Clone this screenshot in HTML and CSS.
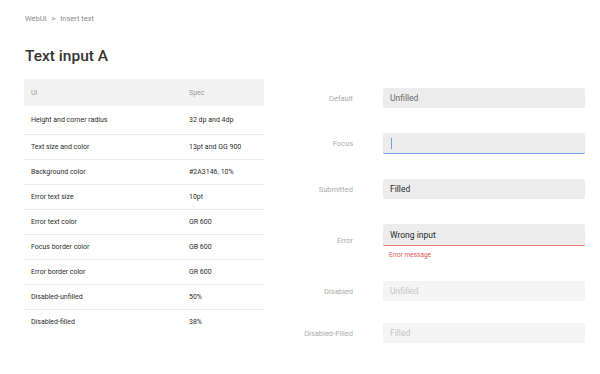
FILE: index.html
```html
<!DOCTYPE html>
<html lang="en">
<head>
  <meta charset="UTF-8" />
  <title>Text input A</title>
  <link rel="stylesheet" href="styles.css">
</head>
<body>
  <div class="page">
    <div class="breadcrumb">WebUI <span class="sep">&gt;</span> Insert text</div>
    <h1>Text input A</h1>

    <div class="content">
      <table class="spec-table">
        <thead>
          <tr><th>UI</th><th>Spec</th></tr>
        </thead>
        <tbody>
          <tr class="first"><td>Height and corner radius</td><td>32 dp and 4dp</td></tr>
          <tr><td>Text size and color</td><td>13pt and GG 900</td></tr>
          <tr><td>Background color</td><td>#2A3146, 10%</td></tr>
          <tr><td>Error text size</td><td>10pt</td></tr>
          <tr><td>Error text color</td><td>GR 600</td></tr>
          <tr><td>Focus border color</td><td>GB 600</td></tr>
          <tr><td>Error border color</td><td>GR 600</td></tr>
          <tr><td>Disabled-unfilled</td><td>50%</td></tr>
          <tr class="last"><td>Disabled-filled</td><td>38%</td></tr>
        </tbody>
      </table>

      <div class="states">
        <div class="state">
          <div class="label">Default</div>
          <div class="field"><div class="input placeholder">Unfilled</div></div>
        </div>
        <div class="state">
          <div class="label">Focus</div>
          <div class="field"><div class="input focus"><span class="caret"></span></div></div>
        </div>
        <div class="state">
          <div class="label">Submitted</div>
          <div class="field"><div class="input">Filled</div></div>
        </div>
        <div class="state">
          <div class="label">Error</div>
          <div class="field">
            <div class="input error">Wrong input</div>
            <div class="error-msg">Error message</div>
          </div>
        </div>
        <div class="state">
          <div class="label">Disabled</div>
          <div class="field"><div class="input disabled">Unfilled</div></div>
        </div>
        <div class="state tight">
          <div class="label">Disabled-Filled</div>
          <div class="field"><div class="input disabled">Filled</div></div>
        </div>
      </div>
    </div>
  </div>
</body>
</html>
```

FILE: styles.css
```css
* {
  box-sizing: border-box;
  margin: 0;
  padding: 0;
  font-family: Roboto, 'Noto Sans', sans-serif;
}

body {
  background-color: #fff;
  color: #333;
}

.page {
  padding: 14px 15px 0 24px;
}

.breadcrumb {
  font-size: 7.5px;
  color: #8a8a8a;
  padding-left: 1px;
  line-height: 10px;
}

.breadcrumb .sep {
  margin: 0 3px;
}

h1 {
  font-size: 15.5px;
  font-weight: 500;
  color: #333;
  margin-top: 22px;
  padding-left: 1px;
  line-height: 20px;
}

.content {
  display: flex;
  margin-top: 13px;
}

/* spec table */
.spec-table {
  width: 240px;
  border-collapse: collapse;
  font-size: 7px;
  align-self: flex-start;
}

.spec-table th {
  background-color: #f2f2f2;
  color: #9a9a9a;
  font-weight: 400;
  text-align: left;
  height: 27px;
  padding-left: 7px;
}

.spec-table th:last-child,
.spec-table td:last-child {
  width: 75px;
  padding-left: 0;
}

.spec-table td {
  height: 25px;
  padding-left: 7px;
  color: #2b2b2b;
  border-bottom: 1px solid #ebebeb;
}

.spec-table tr.first td {
  height: 28px;
}

.spec-table tr.last td {
  border-bottom: none;
}

/* input states */
.states {
  flex: 1;
  display: flex;
  flex-direction: column;
  gap: 25px;
  padding-top: 9px;
}

.state {
  display: flex;
  align-items: center;
}

.state.tight {
  margin-top: -3px;
}

.label {
  width: 89px;
  text-align: right;
  font-size: 7.5px;
  color: #aaa;
}

.field {
  margin-left: 30px;
  width: 202px;
}

.input {
  height: 20px;
  background-color: #ececed;
  border-radius: 2px;
  font-size: 8.5px;
  color: #2a2a2a;
  padding-left: 7px;
  display: flex;
  align-items: center;
}

.input.placeholder {
  color: #6a6a6a;
}

.input.focus {
  border-bottom: 1.5px solid #6d9eeb;
  height: 21px;
}

.caret {
  width: 1px;
  height: 11px;
  background-color: #6d9eeb;
  margin-left: 1px;
}

.input.error {
  border-bottom: 1.5px solid #ef7f7a;
  height: 22px;
}

.error-msg {
  font-size: 6.5px;
  color: #e5534b;
  padding-left: 6px;
  margin-top: 5px;
  margin-bottom: -3px;
  line-height: 8px;
}

.input.disabled {
  background-color: #f4f4f5;
  color: #c6c6c6;
}
```
